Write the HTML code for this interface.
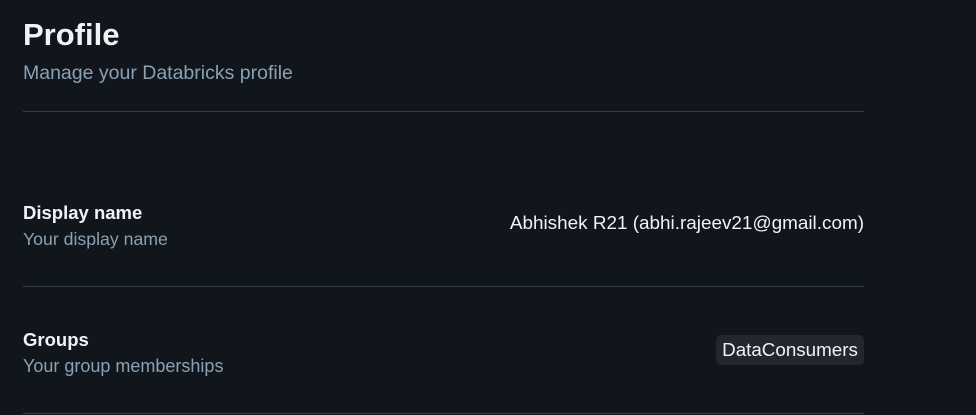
<!DOCTYPE html>
<html><head><style>
body{margin:0;width:976px;height:415px;background:#11161d;font-family:"Liberation Sans",sans-serif;position:relative;overflow:hidden}
div{position:absolute;white-space:nowrap}
.line{left:23px;width:841px;height:1px;background:#343c45}
</style></head><body>
<div style="left:23px;top:17px;font-size:31px;font-weight:bold;color:#f0f3f6">Profile</div>
<div style="left:23px;top:62px;font-size:19.5px;color:#8ba0b2">Manage your Databricks profile</div>
<div class="line" style="top:111px"></div>
<div style="left:23px;top:202px;font-size:18.5px;font-weight:bold;color:#f0f3f6">Display name</div>
<div style="left:23px;top:229px;font-size:17.7px;color:#8ba0b2">Your display name</div>
<div style="right:112px;top:213px;font-size:18.9px;color:#f0f3f6">Abhishek R21 (abhi.rajeev21@gmail.com)</div>
<div class="line" style="top:286px"></div>
<div style="left:23px;top:329px;font-size:18.5px;font-weight:bold;color:#f0f3f6">Groups</div>
<div style="left:23px;top:356px;font-size:18px;color:#8ba0b2">Your group memberships</div>
<div style="left:716px;top:335px;width:148px;height:30px;background:#22272e;border-radius:5px;font-size:18.8px;color:#f0f3f6;line-height:30px;text-align:center">DataConsumers</div>
<div class="line" style="top:413px"></div>
</body></html>
